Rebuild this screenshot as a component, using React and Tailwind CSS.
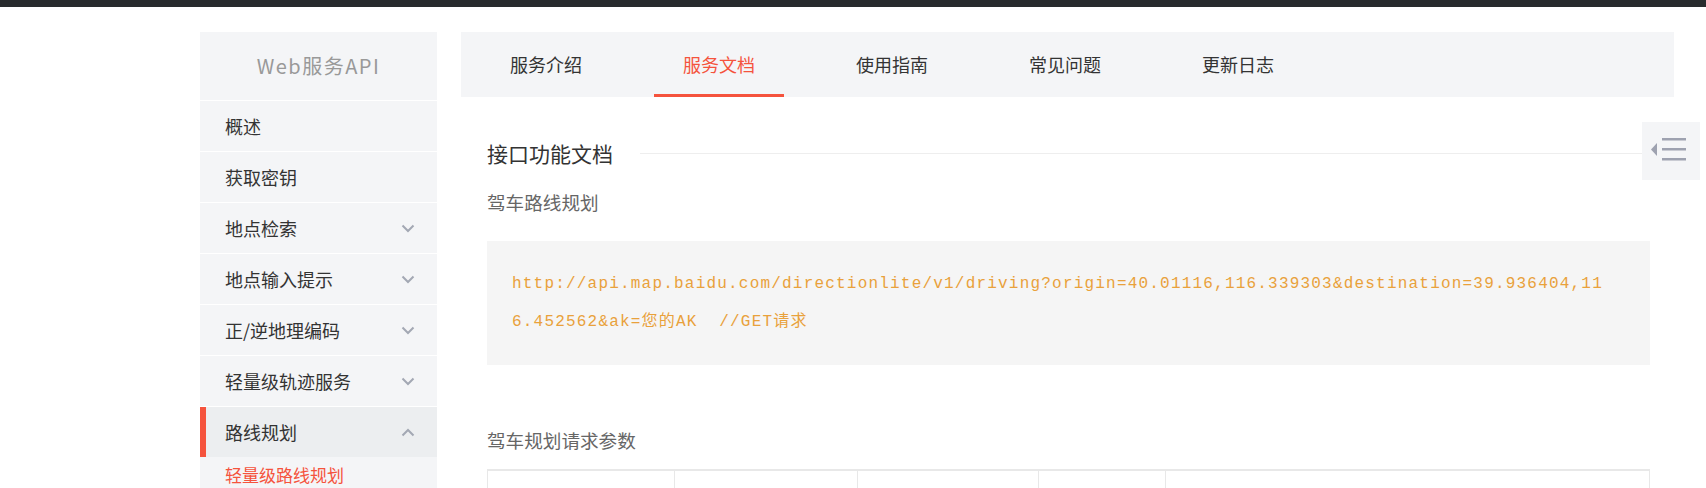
const navItems = [
  { label: '概述' },
  { label: '获取密钥' },
  { label: '地点检索', arrow: 'down' },
  { label: '地点输入提示', arrow: 'down' },
  { label: '正/逆地理编码', arrow: 'down' },
  { label: '轻量级轨迹服务', arrow: 'down' },
  { label: '路线规划', arrow: 'up', active: true },
];

const tabs = ['服务介绍', '服务文档', '使用指南', '常见问题', '更新日志'];

const paramCols = ['w-[187px]', 'w-[183px]', 'w-[181px]', 'w-[127px]', ''];

function Chevron({ up }) {
  return (
    <svg width="14" height="9" viewBox="0 0 14 9" className={up ? 'rotate-180' : ''}>
      <path d="M1.5 1.5 L7 7 L12.5 1.5" fill="none" stroke="#a3a8b4" strokeWidth="2" />
    </svg>
  );
}

function Sidebar() {
  return (
    <aside className="w-[237px] shrink-0 bg-[#f4f5f7] pb-10">
      <div className="h-[68px] flex items-center justify-center text-[20px] tracking-[1.5px] text-[#999]">
        Web服务API
      </div>
      {navItems.map((item) => (
        <div
          key={item.label}
          className={
            'h-[51px] border-t border-white flex items-center justify-between pl-[25px] pr-[22px] text-[18px] text-[#333] ' +
            (item.active ? 'bg-[#eceef0] shadow-[inset_6px_0_0_#f5533d]' : '')
          }
        >
          <span>{item.label}</span>
          {item.arrow && <Chevron up={item.arrow === 'up'} />}
        </div>
      ))}
      <div className="pl-[25px] pt-[6px] text-[17px] leading-6 text-[#f5533d]">轻量级路线规划</div>
    </aside>
  );
}

export default function App() {
  return (
    <div className="relative min-h-screen bg-white font-['Noto_Sans_CJK_SC',sans-serif] overflow-hidden">
      <div className="h-[7px] bg-[#282b2d]" />

      <div className="flex gap-6 pl-[200px] pr-8 pt-[25px]">
        <Sidebar />

        <main className="flex-1 min-w-0">
          {/* tabs */}
          <nav className="h-[65px] bg-[#f4f5f7] flex pl-5 gap-[43px]">
            {tabs.map((t) => (
              <div
                key={t}
                className={
                  'w-[130px] flex items-center justify-center text-[18px] ' +
                  (t === '服务文档'
                    ? 'text-[#f5533d] shadow-[inset_0_-3px_0_#f5533d]'
                    : 'text-[#333]')
                }
              >
                {t}
              </div>
            ))}
          </nav>

          <div className="pl-[26px] pr-6">
            <div className="mt-[42px] flex items-center gap-[27px]">
              <h2 className="text-[21px] leading-[28px] text-[#333]">接口功能文档</h2>
              <div className="flex-1 h-px bg-[#eeeeee]" />
            </div>

            <p className="mt-[23px] text-[18.6px] leading-6 text-[#666]">驾车路线规划</p>

            <div className="mt-[27px] bg-[#f5f5f5] py-6 pl-[25px] pr-6">
              <pre className="font-['Liberation_Mono','Noto_Sans_CJK_SC',monospace] text-[16px] leading-[38px] tracking-[1.2px] text-[#e9a13b] whitespace-pre">
                http://api.map.baidu.com/directionlite/v1/driving?origin=40.01116,116.339303&destination=39.936404,11
                <br />
                6.452562&ak=您的AK  //GET请求
              </pre>
            </div>

            <p className="mt-[63px] text-[18.6px] leading-6 text-[#666]">驾车规划请求参数</p>

            <table className="mt-[17px] w-full border-collapse">
              <tbody>
                <tr className="h-[50px]">
                  {paramCols.map((w, i) => (
                    <td key={i} className={w + ' border border-[#e8e8e8] border-t-2'} />
                  ))}
                </tr>
              </tbody>
            </table>
          </div>
        </main>
      </div>

      {/* floating outline toggle */}
      <button className="absolute right-[6px] top-[122px] w-[58px] h-[58px] bg-[#f4f5f7]">
        <svg width="58" height="58" viewBox="0 0 58 58">
          <polygon points="15,21 9,27.5 15,34" fill="#9ea2b0" />
          <rect x="20" y="16" width="24" height="2.5" fill="#9ea2b0" />
          <rect x="20" y="26" width="24" height="2.5" fill="#9ea2b0" />
          <rect x="20" y="36" width="24" height="2.5" fill="#9ea2b0" />
        </svg>
      </button>
    </div>
  );
}
